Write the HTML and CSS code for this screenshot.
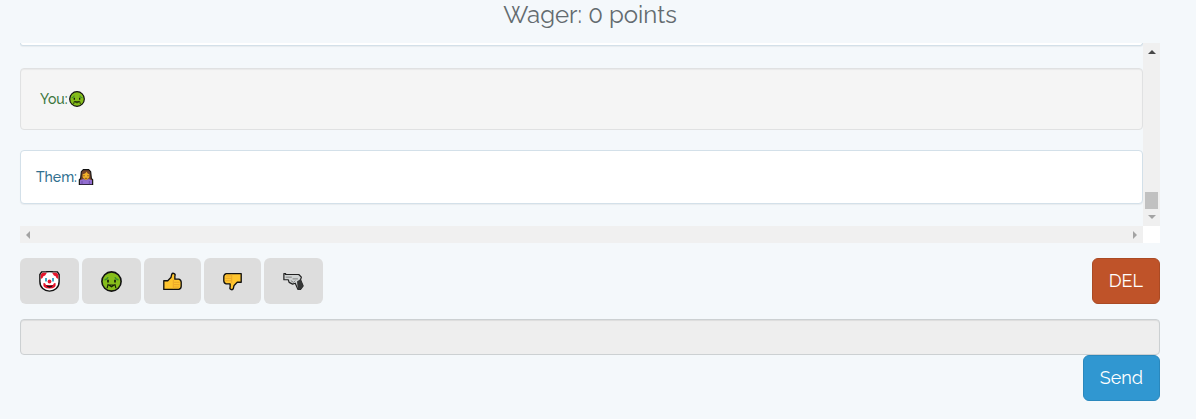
FILE: index.html
```html
<!DOCTYPE html>
<html lang="en">
<head>
<meta charset="utf-8">
<title>Wager chat</title>
<link rel="stylesheet" href="styles.css">
</head>
<body>
<svg class="symbols" aria-hidden="true">
  <symbol id="sick" viewBox="0 0 24 24">
    <circle cx="12" cy="12" r="11" fill="#86bd1b" stroke="#111" stroke-width="1.8"/>
    <path d="M4 10q3 0 4-3M20 10q-3 0-4-3" fill="none" stroke="#399130" stroke-width="1.6"/>
    <path d="M8 10v3M16 10v3" stroke="#172008" stroke-width="2"/>
    <path d="M7 19.5l1-4 4 2.5 4-2.5 1 4M9 16h6" fill="none" stroke="#172008" stroke-width="1.3"/>
  </symbol>
  <symbol id="clown" viewBox="0 0 24 24">
    <path d="M3 1h5q4-1 8 0h5l2 3v8c0 7-5 11-11 11S1 19 1 12V4z" fill="#fff" stroke="#111" stroke-width="1.6"/>
    <path d="M2 9V4l2-2h5L7 5 5 6 4 8zm20 0V4l-2-2h-5l2 3 2 1 1 2z" fill="#e5162c"/>
    <path d="M5 14q2-1 3 2h8q1-3 3-2 1 6-7 6t-7-6z" fill="#e5162c"/>
    <path d="M8 16q4 2 8 0-1 3-4 3t-4-3z" fill="#161014"/>
    <circle cx="12" cy="12" r="2.2" fill="#e5162c"/>
    <path d="M8 8v4M16 8v4" stroke="#279fbe" stroke-width="2"/>
  </symbol>
  <symbol id="thumb" viewBox="0 0 24 24">
    <path d="M1 11h5l4-4 1-4q1-2 3-1t1 3v4h5q3 1 3 4v5q0 3-3 4H1z" fill="#ffc52e" stroke="#111" stroke-width="1.7" stroke-linejoin="round"/>
    <path d="M13 10v11M14 13h7M14 16h7M14 19h6" fill="none" stroke="#e4a02a" stroke-width="1"/>
  </symbol>
  <symbol id="pistol" viewBox="0 0 24 24">
    <path d="M1 3h2v1h15l3 3-1 3 3 7-3 4h-3l-3-7-3 1-4-2-1-3H1z" fill="#d0d3d3" stroke="#222" stroke-width="1.4" stroke-linejoin="round"/>
    <path d="M16 12l4-3 3 8-3 4h-3z" fill="#353636"/>
    <path d="M3 7h7M11 9h6M9 11l3 2 2-2" fill="none" stroke="#777" stroke-width="1"/>
  </symbol>
  <symbol id="woman" viewBox="0 0 22 24">
    <path d="M7 1h8l3 3 1 10 2 2v7H1v-7l2-2L4 4z" fill="#76462b" stroke="#111" stroke-width="1.7"/>
    <path d="M6 8q4-1 6-4 1 3 4 4v4l-3 4H9l-3-4z" fill="#f4b32a"/>
    <path d="M2 23v-6l5-2 4 2 4-2 5 2v6z" fill="#926dd0"/>
    <path d="M8 9v2M14 9v2M9 14h4" stroke="#4a2716" stroke-width="1"/>
    <path d="M5 18v5M16 18v5" stroke="#5e4196"/>
  </symbol>
</svg>
<main class="page">
  <h1 class="wager">Wager: 0 points</h1>
  <section class="chat" aria-label="Messages">
    <div class="messages">
      <div class="message previous"></div>
      <div class="message you">You:<svg class="emoji"><use href="#sick"/></svg></div>
      <div class="message them">Them:<svg class="emoji"><use href="#woman"/></svg></div>
    </div>
    <div class="bar vertical" aria-hidden="true">
      <svg class="arrow" viewBox="0 0 8 8"><path d="M0 6h8L4 2z" fill="#484848"/></svg>
      <div class="thumb"></div>
      <svg class="arrow" viewBox="0 0 8 8"><path d="M0 2h8L4 6z" fill="#a3a3a3"/></svg>
    </div>
    <div class="bar horizontal" aria-hidden="true">
      <svg class="arrow" viewBox="0 0 8 8"><path d="M6 0v8L2 4z" fill="#a3a3a3"/></svg>
      <svg class="arrow" viewBox="0 0 8 8"><path d="M2 0v8l4-4z" fill="#a3a3a3"/></svg>
    </div>
    <div class="corner"></div>
  </section>
  <div class="toolbar">
    <div class="reactions">
      <button class="reaction" type="button" aria-label="Clown"><svg class="icon"><use href="#clown"/></svg></button>
      <button class="reaction" type="button" aria-label="Nauseated"><svg class="icon"><use href="#sick"/></svg></button>
      <button class="reaction narrow" type="button" aria-label="Thumbs up"><svg class="icon"><use href="#thumb"/></svg></button>
      <button class="reaction narrow" type="button" aria-label="Thumbs down"><svg class="icon down"><use href="#thumb"/></svg></button>
      <button class="reaction" type="button" aria-label="Pistol"><svg class="icon"><use href="#pistol"/></svg></button>
    </div>
    <button class="action delete" type="button">DEL</button>
  </div>
  <form class="composer">
    <input class="entry" type="text" aria-label="Message" readonly>
    <button class="action send" type="button">Send</button>
  </form>
</main>
</body>
</html>
```
FILE: styles.css
```css
* { box-sizing: border-box; }

body {
  margin: 0;
  background: #f4f8fb;
  color: #636b6f;
  font-family: Raleway, Lato, "Open Sans", sans-serif;
  font-size: 14px;
}

.symbols { display: none; }

.page { padding: 0 36px 18px 20px; }

.wager {
  margin: 0 0 13px;
  font-size: 24px;
  line-height: 30px;
  font-weight: 400;
  text-align: center;
}

.chat {
  display: grid;
  grid-template-columns: 1fr 17px;
  grid-template-rows: auto 17px;
  margin-bottom: 15px;
}

.messages { padding-bottom: 22px; }

.message {
  display: flex;
  align-items: center;
  gap: 1px;
  margin-bottom: 20px;
  border: 1px solid #d3e0e9;
  border-radius: 4px;
  line-height: 22px;
  font-weight: 500;
}

.message:last-child { margin-bottom: 0; }

.previous {
  height: 3px;
  margin-bottom: 22px;
  border-top: 0;
  border-radius: 0 0 4px 4px;
  background: #fff;
  box-shadow: 0 1px 1px #0000000d;
}

.you {
  padding: 19px;
  background: #f5f5f5;
  border-color: #e0e1e2;
  box-shadow: inset 0 1px 1px #0000000d;
  color: #3c763d;
}

.them {
  padding: 15px;
  background: #fff;
  box-shadow: 0 1px 1px #0000000d;
  color: #31708f;
}

.emoji {
  width: 16px;
  height: 16px;
}

.bar {
  display: flex;
  align-items: center;
  background: #f0f0f0;
}

.vertical {
  flex-direction: column;
  padding: 5px 0;
}

.horizontal {
  justify-content: space-between;
  padding: 0 4px;
}

.arrow {
  width: 8px;
  height: 8px;
}

.thumb {
  width: 13px;
  height: 17px;
  margin: auto 0 4px;
  background: #c1c1c1;
}

.corner { background: #fff; }

.toolbar {
  display: flex;
  justify-content: space-between;
  margin-bottom: 15px;
}

.reactions {
  display: flex;
  gap: 3px;
}

.reaction {
  display: grid;
  place-items: center;
  width: 59px;
  height: 46px;
  padding: 0;
  border: 0;
  border-radius: 6px;
  background: #ddd;
}

.narrow { width: 57px; }

.icon {
  width: 21px;
  height: 21px;
}

.narrow .icon {
  width: 19px;
  height: 19px;
}

.down { transform: rotate(180deg); }

.action {
  padding: 10px 16px;
  border: 1px solid;
  border-radius: 6px;
  color: #fff;
  font-family: inherit;
  font-size: 18px;
  line-height: 24px;
}

.delete {
  min-width: 68px;
  background: #bf5329;
  border-color: #aa4a24;
}

.send {
  min-width: 77px;
  background: #3097d1;
  border-color: #2a88bd;
}

.composer {
  display: flex;
  flex-direction: column;
  align-items: flex-end;
}

.entry {
  width: 100%;
  height: 36px;
  padding: 6px 12px;
  border: 1px solid #ccd0d2;
  border-radius: 4px;
  background: #eee;
  box-shadow: inset 0 1px 1px #00000013;
  font: inherit;
}
```
